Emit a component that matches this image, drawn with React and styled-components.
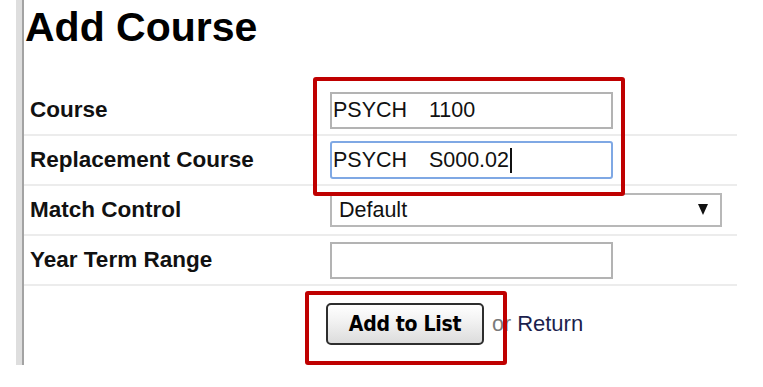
import React from 'react';
import styled, { createGlobalStyle } from 'styled-components';

const GlobalStyle = createGlobalStyle`
  html, body {
    margin: 0;
    padding: 0;
    background: #fff;
  }
  body {
    font-family: 'Liberation Sans', Arial, sans-serif;
    color: #111;
  }
`;

const fields = [
  { label: 'Course', value: 'PSYCH   1100' },
  { label: 'Replacement Course', value: 'PSYCH   S000.02', focused: true },
  { label: 'Match Control', select: 'Default' },
  { label: 'Year Term Range', value: '' },
];

const App = () => {
  return (
    <>
      <GlobalStyle />
      <Frame>
        <Content>
          <Title>Add Course</Title>
          <Form>
            {fields.map((f) => (
              <Row key={f.label}>
                <Label>{f.label}</Label>
                {f.select ? (
                  <SelectWrap>
                    <Select defaultValue={f.select}>
                      <option>{f.select}</option>
                    </Select>
                    <Arrow viewBox="0 0 10 11" aria-hidden="true">
                      <path d="M0 0 H10 L5 11 Z" fill="#111" />
                    </Arrow>
                  </SelectWrap>
                ) : f.focused ? (
                  <FakeInput $focused>
                    {f.value}
                    <Caret />
                  </FakeInput>
                ) : (
                  <Input type="text" defaultValue={f.value} />
                )}
              </Row>
            ))}
            <ActionRow>
              <span />
              <Actions>
                <AddButton type="button">Add to List</AddButton>
                <Or>or</Or>
                <ReturnLink href="#">Return</ReturnLink>
              </Actions>
            </ActionRow>
          </Form>
          <Highlight $left={289} $top={77} $width={312} $height={119} />
          <Highlight $left={281} $top={291} $width={202} $height={74} />
        </Content>
      </Frame>
    </>
  );
};

export default App;

const Frame = styled.div`
  margin-left: 16px;
  height: 365px;
  border-left: 6px solid #dedede;
`;

const Content = styled.div`
  position: relative;
  box-sizing: border-box;
  height: 100%;
  width: 715px;
  border-left: 2px solid #a3a3a3;
`;

const Title = styled.h1`
  margin: 0;
  padding: 7px 0 0 1px;
  height: 78px;
  box-sizing: border-box;
  font-size: 41px;
  line-height: 41px;
  font-weight: bold;
  color: #000;
`;

const Form = styled.div`
  display: flex;
  flex-direction: column;
  margin-top: 8px;
`;

const Row = styled.div`
  display: grid;
  grid-template-columns: 306px 1fr;
  align-items: center;
  height: 38px;
  padding: 5px 0 5px;
  border-bottom: 2px solid #ececec;
`;

const Label = styled.div`
  padding-left: 6px;
  font-size: 22.5px;
  font-weight: bold;
  color: #111;
`;

const inputBox = `
  box-sizing: border-box;
  width: 283px;
  height: 37px;
  padding: 0 1px;
  font-family: 'Liberation Sans', Arial, sans-serif;
  font-size: 21.5px;
  color: #111;
  background: #fff;
  white-space: pre;
  word-spacing: 1.3px;
`;

const Input = styled.input`
  ${inputBox}
  border: 2px solid #b3b3b3;
  outline: none;
`;

const FakeInput = styled.div`
  ${inputBox}
  height: 38px;
  display: flex;
  align-items: center;
  border: 2px solid ${(p) => (p.$focused ? '#7fa8e4' : '#b3b3b3')};
  border-radius: 3px;
`;

const Caret = styled.span`
  display: inline-block;
  width: 1.5px;
  height: 25px;
  margin-left: 1px;
  background: #111;
`;

const SelectWrap = styled.div`
  position: relative;
  width: 392px;
  height: 34px;
`;

const Select = styled.select`
  appearance: none;
  box-sizing: border-box;
  width: 100%;
  height: 100%;
  padding: 0 0 0 7px;
  border: 2px solid #b8b8b8;
  border-radius: 0;
  background: #fff;
  font-family: 'Liberation Sans', Arial, sans-serif;
  font-size: 21.5px;
  color: #111;
  outline: none;
`;

const Arrow = styled.svg`
  position: absolute;
  right: 14px;
  top: 11px;
  width: 10px;
  height: 11px;
  pointer-events: none;
`;

const ActionRow = styled.div`
  display: grid;
  grid-template-columns: 302px 1fr;
  padding-top: 17px;
`;

const Actions = styled.div`
  display: flex;
  align-items: center;
`;

const AddButton = styled.button`
  box-sizing: border-box;
  width: 158px;
  height: 42px;
  padding: 0;
  border: 2px solid #2e2e2e;
  border-radius: 5px;
  background: linear-gradient(#ffffff 0%, #f1f1f1 45%, #dcdcdc 100%);
  font-family: 'DejaVu Sans Condensed', 'DejaVu Sans', Verdana, sans-serif;
  font-stretch: condensed;
  font-size: 21px;
  font-weight: bold;
  color: #000;
  letter-spacing: -0.3px;
`;

const Or = styled.span`
  margin-left: 8px;
  font-size: 21.5px;
  color: #7a7a7a;
`;

const ReturnLink = styled.a`
  margin-left: 6px;
  font-size: 22px;
  color: #1c1f4e;
  text-decoration: none;
`;

const Highlight = styled.div`
  position: absolute;
  left: ${(p) => p.$left}px;
  top: ${(p) => p.$top}px;
  width: ${(p) => p.$width}px;
  height: ${(p) => p.$height}px;
  box-sizing: border-box;
  border: 4px solid #bf0000;
  border-radius: 3px;
  pointer-events: none;
`;
